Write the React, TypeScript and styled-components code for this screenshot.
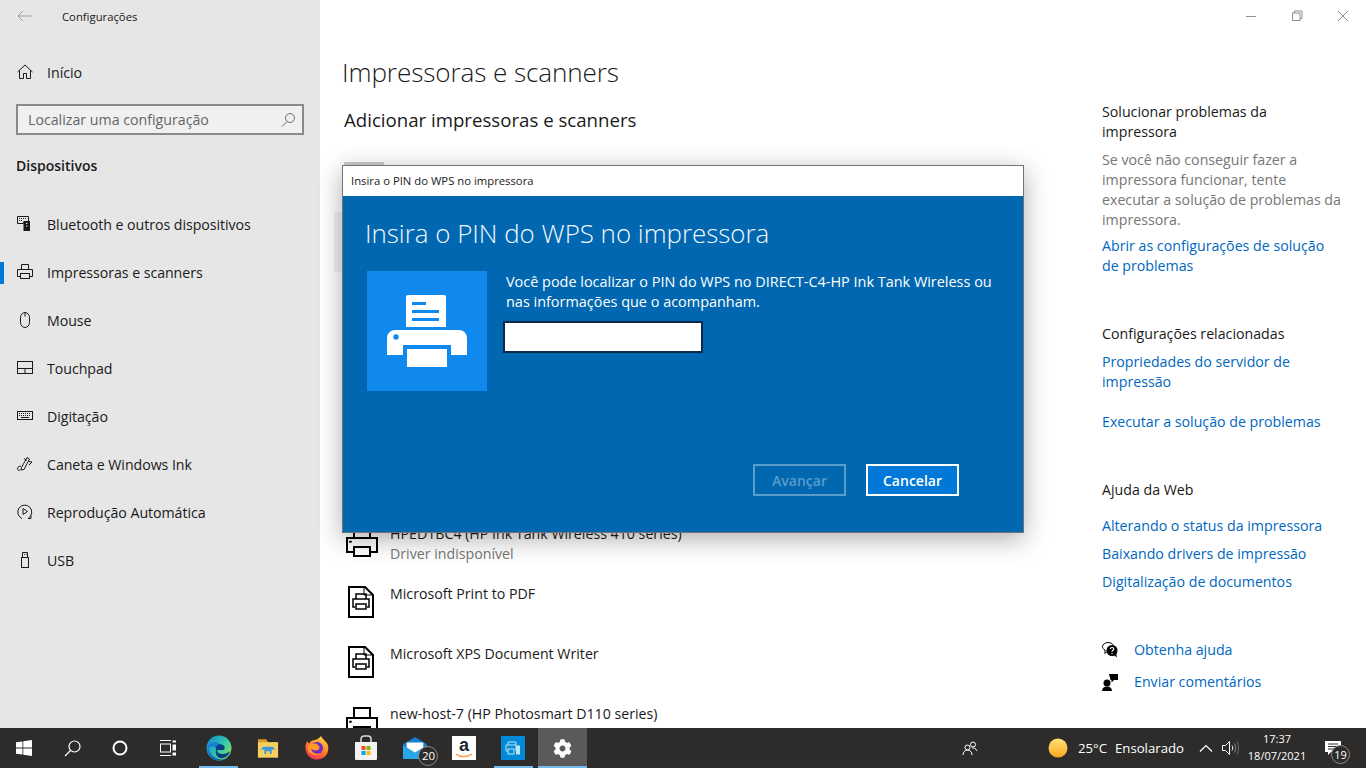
import React from "react";
import styled, { createGlobalStyle } from "styled-components";
import { FaCog } from "react-icons/fa";

const FONT = `"Open Sans", "Noto Sans", "Liberation Sans", sans-serif`;

const GlobalStyle = createGlobalStyle`
  html, body {
    margin: 0;
    padding: 0;
    width: 100%;
    height: 100%;
    overflow: hidden;
    background: #ffffff;
  }
  #root {
    height: 100%;
  }
  * {
    box-sizing: border-box;
  }
`;

const Screen = styled.div`
  position: relative;
  width: 1366px;
  height: 768px;
  display: flex;
  flex-direction: column;
  font-family: ${FONT};
  color: #1a1a1a;
  overflow: hidden;
`;

const Desktop = styled.div`
  flex: 1;
  min-height: 0;
  display: flex;
`;

/* sidebar */
const Sidebar = styled.aside`
  width: 320px;
  flex: none;
  background: #e6e6e6;
  display: flex;
  flex-direction: column;
`;

const AppBar = styled.div`
  height: 32px;
  display: flex;
  align-items: center;
  padding-left: 17px;
  gap: 30px;
  font-size: 11.3px;
`;

const HomeRow = styled.div`
  height: 48px;
  margin-top: 16px;
  display: flex;
  align-items: center;
  gap: 13px;
  padding-left: 16px;
  font-size: 14.2px;
`;

const SearchBox = styled.div`
  margin: 8px 16px 0 16px;
  height: 31px;
  border: 2px solid #8a8a8a;
  background: #f0f0f0;
  display: flex;
  align-items: center;
  justify-content: space-between;
  padding: 0 6px 0 10px;
  font-size: 14.2px;
  color: #666666;
`;

const SectionTitle = styled.div`
  margin: 20px 0 0 16px;
  height: 22px;
  line-height: 22px;
  font-size: 14px;
  font-weight: 600;
  color: #1a1a1a;
`;

const NavList = styled.nav`
  margin-top: 23px;
  display: flex;
  flex-direction: column;
`;

const NavItem = styled.div<{ $active?: boolean }>`
  position: relative;
  height: 48px;
  display: flex;
  align-items: center;
  gap: 13px;
  padding-left: 16px;
  font-size: 14.2px;
  letter-spacing: -0.05px;

  &::before {
    content: "";
    display: ${(p) => (p.$active ? "block" : "none")};
    position: absolute;
    left: 0;
    top: 14px;
    width: 4px;
    height: 22px;
    background: #0078d7;
  }
`;

const NavIcon = styled.svg`
  width: 18px;
  height: 18px;
  flex: none;
  fill: none;
  stroke: #1a1a1a;
  stroke-width: 1;
`;

/* main column */
const Main = styled.main`
  flex: 1;
  min-width: 0;
  padding: 0 0 0 22px;
  overflow: hidden;
`;

const PageTitle = styled.h1`
  margin: 49px 0 0;
  height: 46px;
  line-height: 46px;
  font-size: 26.1px;
  font-weight: 300;
  color: #1a1a1a;
  letter-spacing: -0.1px;
`;

const SubTitle = styled.h2`
  margin: 7px 0 0 2px;
  height: 36px;
  line-height: 36px;
  font-size: 18.65px;
  font-weight: 400;
  color: #1a1a1a;
`;

const AddTile = styled.div`
  width: 40px;
  height: 40px;
  margin: 24px 0 0 2px;
  background: #cccccc;
`;

const PrinterList = styled.div`
  margin: 10px 0 0 -8px;
  display: flex;
  flex-direction: column;
`;

const SelectedRow = styled.div`
  width: 660px;
  height: 60px;
  background: #f2f2f2;
`;

const CoveredRows = styled.div`
  height: 240px;
`;

const PrinterRow = styled.div`
  height: 60px;
  display: flex;
  padding-left: 10px;
  gap: 10px;
`;

const PrinterIconBox = styled.div`
  width: 36px;
  height: 60px;
  flex: none;
  display: flex;
  align-items: center;
  justify-content: center;
`;

const PrinterText = styled.div`
  padding-top: 12px;
  font-size: 14.2px;
  line-height: 20px;
`;

const PrinterStatus = styled.div`
  color: #767676;
`;

/* right column */
const Aside = styled.aside`
  width: 264px;
  flex: none;
  padding-top: 102px;
  font-size: 14.2px;
  line-height: 20px;
`;

const AsideBlock = styled.section`
  margin-bottom: 48px;
  width: 242px;
`;

const AsideHeading = styled.div<{ $space?: number }>`
  margin-bottom: ${(p) => p.$space ?? 8}px;
  color: #1a1a1a;
`;

const AsideText = styled.div`
  color: #767676;
  margin-bottom: 6px;
`;

const AsideLink = styled.div<{ $space?: number }>`
  color: #0067c0;
  margin-bottom: ${(p) => p.$space ?? 0}px;
`;

const SupportRow = styled.div`
  display: flex;
  align-items: center;
  gap: 16px;
  height: 20px;
  margin-bottom: 12px;
  color: #0067c0;
`;

/* window buttons */
const WindowControls = styled.div`
  position: absolute;
  top: 0;
  right: 0;
  display: flex;
`;

const WindowButton = styled.div`
  width: 46px;
  height: 32px;
  display: flex;
  align-items: center;
  justify-content: center;
`;

const ControlIcon = styled.svg`
  width: 12px;
  height: 12px;
  fill: none;
  stroke: #8f8f8f;
  stroke-width: 1;
`;

/* dialog */
const Dialog = styled.div`
  position: absolute;
  left: 342px;
  top: 165px;
  width: 682px;
  height: 368px;
  border: 1px solid #737373;
  display: flex;
  flex-direction: column;
  box-shadow: 0 6px 24px rgba(0, 0, 0, 0.32);
`;

const DialogTitleBar = styled.div`
  height: 30px;
  flex: none;
  background: #ffffff;
  display: flex;
  align-items: center;
  padding: 0 0 2px 8px;
  font-size: 11.3px;
  color: #1a1a1a;
`;

const DialogBody = styled.div`
  flex: 1;
  background: #0067b0;
  color: #ffffff;
  padding: 15px 22px 0 22px;
  display: flex;
  flex-direction: column;
`;

const DialogHeading = styled.div`
  height: 44px;
  line-height: 44px;
  font-size: 25.9px;
  font-weight: 300;
  color: #f4f8fc;
`;

const DialogContent = styled.div`
  margin-top: 16px;
  display: flex;
  padding-left: 2px;
`;

const Tile = styled.div`
  width: 120px;
  height: 120px;
  flex: none;
  background: #0f89ee;
  display: flex;
  align-items: center;
  justify-content: center;
`;

const PinColumn = styled.div`
  margin-left: 16px;
  width: 500px;
`;

const PinHint = styled.div`
  padding: 1px 0 0 3px;
  font-size: 14.45px;
  line-height: 20px;
`;

const PinInput = styled.div`
  margin-top: 9px;
  width: 200px;
  height: 32px;
  background: #ffffff;
  border: 2px solid #0b2a49;
`;

const DialogActions = styled.div`
  margin-top: 73px;
  display: flex;
  justify-content: flex-end;
  gap: 20px;
  padding-right: 42px;
`;

const DialogButton = styled.div<{ $primary?: boolean }>`
  width: 93px;
  height: 32px;
  display: flex;
  align-items: center;
  justify-content: center;
  font-size: 14px;
  font-weight: 600;
  border: 2px solid ${(p) => (p.$primary ? "#ffffff" : "rgba(255,255,255,0.36)")};
  background: ${(p) => (p.$primary ? "#0078d7" : "transparent")};
  color: ${(p) => (p.$primary ? "#ffffff" : "rgba(255,255,255,0.36)")};
`;

/* taskbar */
const Taskbar = styled.footer`
  height: 40px;
  flex: none;
  background: #2d2c2b;
  display: flex;
  align-items: stretch;
  color: #ffffff;
  position: relative;
`;

const ShellButton = styled.div`
  width: 48px;
  display: flex;
  align-items: center;
  justify-content: center;
`;

const Pinned = styled.div`
  margin-left: 2px;
  display: flex;
`;

const PinnedButton = styled.div<{ $running?: boolean; $current?: boolean }>`
  position: relative;
  width: 49.1px;
  display: flex;
  align-items: center;
  justify-content: center;
  background: ${(p) => (p.$current ? "#5c5a58" : "transparent")};

  &::after {
    content: "";
    display: ${(p) => (p.$running ? "block" : "none")};
    position: absolute;
    left: ${(p) => (p.$current ? 0 : 5)}px;
    right: ${(p) => (p.$current ? 0 : 5)}px;
    bottom: 0;
    height: 2px;
    background: #76b9ed;
  }
`;

const CountBadge = styled.span`
  position: absolute;
  width: 20px;
  height: 20px;
  right: 1px;
  bottom: 2px;
  border-radius: 50%;
  background: #2d2c2b;
  border: 1px solid #8a8a8a;
  font-size: 11.5px;
  line-height: 18px;
  text-align: center;
  color: #ffffff;
`;

const Tray = styled.div`
  margin-left: auto;
  display: flex;
  align-items: center;
  font-size: 13.2px;
  color: #ffffff;
`;

const PeopleSlot = styled.div`
  width: 24px;
  margin-right: 66px;
  display: flex;
  justify-content: center;
`;

const WeatherText = styled.span`
  margin-left: 10px;
  white-space: nowrap;
`;

const WeatherLabel = styled.span`
  margin-left: 8px;
  white-space: nowrap;
`;

const TrayIcon = styled.div<{ $gap: number }>`
  margin-left: ${(p) => p.$gap}px;
  display: flex;
  align-items: center;
`;

const Clock = styled.div`
  width: 72px;
  margin-left: 2px;
  padding-bottom: 2px;
  text-align: center;
  font-size: 11px;
  line-height: 17px;
`;

const Notify = styled.div`
  position: relative;
  width: 40px;
  height: 40px;
  margin-right: 13px;
  display: flex;
  align-items: center;
  justify-content: center;
`;

const NotifyBadge = styled.span`
  position: absolute;
  left: 18px;
  top: 17px;
  width: 19px;
  height: 19px;
  border-radius: 50%;
  background: #2d2c2b;
  border: 1px solid #8a8a8a;
  font-size: 11px;
  line-height: 17px;
  text-align: center;
`;

const AmazonTile = styled.div`
  position: relative;
  width: 24px;
  height: 24px;
  background: #ffffff;
  color: #1a2430;
  font-family: "Liberation Sans", sans-serif;
  font-weight: 700;
  font-size: 18px;
  line-height: 19px;
  text-align: center;
`;

const AmazonSmile = styled.svg`
  position: absolute;
  left: 3px;
  bottom: 1px;
  width: 18px;
  height: 6px;
  fill: none;
  stroke: #f79c34;
  stroke-width: 1.4;
`;

const AppTile = styled.div`
  width: 24px;
  height: 24px;
  background: #0089d6;
  display: flex;
  align-items: center;
  justify-content: center;
`;

const GearIcon = styled(FaCog)`
  width: 19px;
  height: 19px;
  color: #ffffff;
`;

const navEntries = [
  {
    label: "Bluetooth e outros dispositivos",
    icon: (
      <>
        <path d="M1.5 1.5h11v6h-5v1h-6z" />
        <path d="M3 3.5h8M3 5.5h4" strokeDasharray="1 1" />
        <rect x="8" y="6.5" width="5.5" height="9" fill="#1a1a1a" />
        <path d="M10 8.5h1.500M10 11h1.500" stroke="#e6e6e6" />
      </>
    ),
  },
  {
    label: "Impressoras e scanners",
    active: true,
    icon: (
      <>
        <path d="M5.500 6.500v-5h7v5" />
        <path d="M4.500 13.500h-3v-7h15v7h-3" />
        <rect x="4.500" y="10.500" width="9" height="5" />
      </>
    ),
  },
  {
    label: "Mouse",
    icon: (
      <>
        <path d="M4.500 6.500a4.500 5 0 0 1 9 0v5a4.500 5 0 0 1-9 0z" />
        <path d="M9 1.500v4" />
      </>
    ),
  },
  {
    label: "Touchpad",
    icon: (
      <>
        <rect x="1.500" y="2.500" width="15" height="12" />
        <path d="M1.500 9.500h15M9 9.500v5" />
      </>
    ),
  },
  {
    label: "Digitação",
    icon: (
      <>
        <rect x="1.500" y="4.500" width="15" height="8" />
        <path d="M3 6.500h12M3 8.500h12" strokeDasharray="1 1" />
        <path d="M5 10.500h8" />
      </>
    ),
  },
  {
    label: "Caneta e Windows Ink",
    icon: (
      <>
        <path d="M5.500 12.500l5.500-10 2.500 1.500-5.500 10.500-3 .5z" />
        <path d="M8 3.500l3 2M13 6.500l3 .5-3 3" />
        <path d="M5 11c-3 .5-4 2-3.500 3.500.5 1.200 2 1 3 0" />
      </>
    ),
  },
  {
    label: "Reprodução Automática",
    icon: (
      <>
        <path d="M6 15.500a7 7 0 1 1 6.500-.5" />
        <path d="M7 5.500l4.500 3-4.500 3z" />
        <path d="M15 12.500v3h-3" />
      </>
    ),
  },
  {
    label: "USB",
    icon: (
      <>
        <rect x="5.500" y="6.500" width="7" height="10" />
        <path d="M6.500 6.500v-5h5v5" />
        <path d="M8 3.500h.8M9.700 3.500h.8" />
      </>
    ),
  },
];

function PrinterOutline() {
  return (
    <svg width="34" height="32" viewBox="0 0 34 32" fill="none" stroke="#000" strokeWidth="2">
      <path d="M9 12V2h16v10" />
      <path d="M9 26H2V12h30v14h-7" />
      <rect x="9" y="21" width="16" height="9" />
      <rect x="4.500" y="15" width="2" height="1.500" fill="#000" strokeWidth="0.500" />
    </svg>
  );
}

function DocPrinter() {
  return (
    <svg width="28" height="32" viewBox="0 0 28 32" fill="none" stroke="#000" strokeWidth="2">
      <path d="M1 1h16l8 8v22H1z" />
      <path d="M16 1v8h8" strokeWidth="1" />
      <path d="M8 13V8h10v5" strokeWidth="1.500" />
      <path d="M7 21H5v-8h16v8h-2" strokeWidth="1.500" />
      <rect x="8" y="18" width="10" height="5" strokeWidth="1.500" />
    </svg>
  );
}

function BigPrinter() {
  return (
    <svg width="80" height="72" viewBox="0 0 80 72" fill="#fff">
      <path d="M21 0h36a2 2 0 0 1 2 2v30H19V2a2 2 0 0 1 2-2z" />
      <rect x="25" y="7" width="14" height="3" fill="#0f89ee" />
      <rect x="25" y="15" width="27" height="3" fill="#0f89ee" />
      <rect x="25" y="23" width="27" height="3" fill="#0f89ee" />
      <path d="M8 35h64a8 8 0 0 1 8 8v17H64V50H16v10H0V43a8 8 0 0 1 8-8z" />
      <rect x="20" y="54" width="40" height="18" />
      <circle cx="9" cy="42" r="2.700" fill="#0f89ee" />
    </svg>
  );
}

function EdgeLogo() {
  return (
    <svg width="26" height="26" viewBox="0 0 26 26">
      <defs>
        <linearGradient id="edgeTop" x1="0" y1="0" x2="1" y2="0.700">
          <stop offset="0" stopColor="#0c8ad0" />
          <stop offset="0.600" stopColor="#30c5b0" />
          <stop offset="1" stopColor="#7fe06a" />
        </linearGradient>
        <linearGradient id="edgeBottom" x1="0" y1="0" x2="1" y2="1">
          <stop offset="0" stopColor="#1a8fe0" />
          <stop offset="1" stopColor="#0c4c9a" />
        </linearGradient>
      </defs>
      <circle cx="13" cy="13" r="12.500" fill="url(#edgeTop)" />
      <path d="M1 14c0-6 6-8 10-6.500 4 1.500 6 4 6 7-2 .8-6 1-7 -1-2-3-6-2-7 0 0 5 6 11 13 11 3 0 5-1 7-3-3 4-7 4-10 4C6 25.500 1 20 1 14z" fill="url(#edgeBottom)" />
      <path d="M10 15c-1-4 3-7 7-5 2 1 2 3 1 5h-7c0 3 3 4 6 4 2 0 5-1 7-3-1 5-6 8-10 7-3-1-5-4-4-8z" fill="#0a3f80" />
    </svg>
  );
}

function FolderLogo() {
  return (
    <svg width="22" height="19" viewBox="0 0 24 20">
      <path d="M1 0h9l2 3h-11z" fill="#d69a28" />
      <rect x="1" y="3" width="22" height="17" fill="#f7cf5c" />
      <path d="M7 8h10l3 3H16v5H8v-5H4z" fill="#3a9ae0" />
      <rect x="10" y="13" width="4" height="4" fill="#f7cf5c" />
    </svg>
  );
}

function FirefoxLogo() {
  return (
    <svg width="24" height="24" viewBox="0 0 24 24">
      <defs>
        <linearGradient id="foxBody" x1="0.700" y1="0" x2="0.200" y2="1">
          <stop offset="0" stopColor="#ffd53d" />
          <stop offset="0.500" stopColor="#ff7a2a" />
          <stop offset="1" stopColor="#f02a5a" />
        </linearGradient>
      </defs>
      <path d="M16 0c1 3 5 5 6.500 8 1.500 4 1 9-2.500 12.500-4 3.500-10 4-14 1.500C2 19.500 0 15 .5 10c0-2 1-4 2-5 0 1 .5 2 1.500 2.500C5 5 8 4 10 4c2-1 5-2 6-4z" fill="url(#foxBody)" />
      <circle cx="12" cy="12" r="6" fill="#6b2bc7" />
      <path d="M3 10c3-3 8-3 10-1 2 1 2 4 0 5-2 1-5 0-7-1 1 4 6 6 10 4-4 4-11 2-13-3z" fill="#ff9a2a" />
    </svg>
  );
}

function StoreLogo() {
  return (
    <svg width="24" height="26" viewBox="0 0 24 26">
      <path d="M7 8V4a3 3 0 0 1 3-3h4a3 3 0 0 1 3 3v4" fill="none" stroke="#dcdcdc" strokeWidth="1.500" />
      <path d="M1 7h22v17a1 1 0 0 1-1 1H2a1 1 0 0 1-1-1z" fill="#f2f2f2" />
      <rect x="7.500" y="11" width="4" height="4" fill="#f25022" />
      <rect x="12.500" y="11" width="4" height="4" fill="#7fba00" />
      <rect x="7.500" y="16" width="4" height="4" fill="#00a4ef" />
      <rect x="12.500" y="16" width="4" height="4" fill="#ffb900" />
    </svg>
  );
}

function MailLogo() {
  return (
    <svg width="24" height="24" viewBox="0 0 26 24">
      <path d="M0 8l13-8 13 8v16H0z" fill="#1281d0" />
      <path d="M4 6h18v6l-9 6-9-6z" fill="#ffffff" />
      <path d="M0 9l13 8 13-8v15H0z" fill="#28a8ea" />
    </svg>
  );
}

export default function App() {
  return (
    <Screen>
      <GlobalStyle />
      <Desktop>
        <Sidebar>
          <AppBar>
            <svg width="15" height="12" viewBox="0 0 15 12" fill="none" stroke="#9a9a9a">
              <path d="M14.500 6H1M6 1L1 6l5 5" />
            </svg>
            Configurações
          </AppBar>
          <HomeRow>
            <NavIcon viewBox="0 0 18 18">
              <path d="M1.500 9L9 2l7.500 7M3.500 7.500v8h4v-5h3v5h4v-8" />
            </NavIcon>
            Início
          </HomeRow>
          <SearchBox>
            Localizar uma configuração
            <svg width="16" height="16" viewBox="0 0 16 16" fill="none" stroke="#6f6f6f">
              <circle cx="10" cy="6" r="4.500" />
              <path d="M7 9.500L2 14.500" />
            </svg>
          </SearchBox>
          <SectionTitle>Dispositivos</SectionTitle>
          <NavList>
            {navEntries.map((entry) => (
              <NavItem key={entry.label} $active={entry.active}>
                <NavIcon viewBox="0 0 18 18">{entry.icon}</NavIcon>
                {entry.label}
              </NavItem>
            ))}
          </NavList>
        </Sidebar>
        <Main>
          <PageTitle>Impressoras e scanners</PageTitle>
          <SubTitle>Adicionar impressoras e scanners</SubTitle>
          <AddTile />
          <PrinterList>
            <SelectedRow />
            <CoveredRows />
            <PrinterRow>
              <PrinterIconBox>
                <PrinterOutline />
              </PrinterIconBox>
              <PrinterText>
                HPED1BC4 (HP Ink Tank Wireless 410 series)
                <PrinterStatus>Driver indisponível</PrinterStatus>
              </PrinterText>
            </PrinterRow>
            <PrinterRow>
              <PrinterIconBox>
                <DocPrinter />
              </PrinterIconBox>
              <PrinterText>Microsoft Print to PDF</PrinterText>
            </PrinterRow>
            <PrinterRow>
              <PrinterIconBox>
                <DocPrinter />
              </PrinterIconBox>
              <PrinterText>Microsoft XPS Document Writer</PrinterText>
            </PrinterRow>
            <PrinterRow>
              <PrinterIconBox>
                <PrinterOutline />
              </PrinterIconBox>
              <PrinterText>new-host-7 (HP Photosmart D110 series)</PrinterText>
            </PrinterRow>
          </PrinterList>
        </Main>
        <Aside>
          <AsideBlock>
            <AsideHeading>Solucionar problemas da impressora</AsideHeading>
            <AsideText>
              Se você não conseguir fazer a impressora funcionar, tente executar a solução de
              problemas da impressora.
            </AsideText>
            <AsideLink>Abrir as configurações de solução de problemas</AsideLink>
          </AsideBlock>
          <AsideBlock>
            <AsideHeading>Configurações relacionadas</AsideHeading>
            <AsideLink $space={20}>Propriedades do servidor de impressão</AsideLink>
            <AsideLink>Executar a solução de problemas</AsideLink>
          </AsideBlock>
          <AsideBlock>
            <AsideHeading $space={16}>Ajuda da Web</AsideHeading>
            <AsideLink $space={8}>Alterando o status da impressora</AsideLink>
            <AsideLink $space={8}>Baixando drivers de impressão</AsideLink>
            <AsideLink>Digitalização de documentos</AsideLink>
          </AsideBlock>
          <SupportRow>
            <svg width="16" height="16" viewBox="0 0 16 16">
              <path d="M6 .5c3 0 5.500 1.500 5.500 4S9 8.500 6 8.500l-3 3V8C1.500 7.500.5 6 .5 4.500c0-2 2.500-4 5.500-4z" fill="#fff" stroke="#000" />
              <circle cx="10" cy="8.500" r="5.500" fill="#000" />
              <path d="M12 13l3 2.500-1-5z" fill="#000" />
              <path d="M8.300 7c0-2 3.500-2 3.500 0 0 1.300-1.800 1.300-1.800 2.700M10 11v1" fill="none" stroke="#fff" strokeWidth="1.200" />
            </svg>
            Obtenha ajuda
          </SupportRow>
          <SupportRow>
            <svg width="16" height="17" viewBox="0 0 16 17" fill="#000">
              <circle cx="5" cy="9" r="3.500" />
              <path d="M0 17c0-3 2-4.500 5-4.500s5 1.500 5 4.500z" />
              <path d="M7 0h9v6h-4l-2.500 2.500V6H8.500z" />
            </svg>
            Enviar comentários
          </SupportRow>
        </Aside>
      </Desktop>

      <WindowControls>
        <WindowButton>
          <ControlIcon viewBox="0 0 12 12">
            <path d="M1 6.500h10" />
          </ControlIcon>
        </WindowButton>
        <WindowButton>
          <ControlIcon viewBox="0 0 12 12">
            <rect x="1.500" y="3" width="7.500" height="7.500" />
            <path d="M3.500 3V1h7.500v7.500H9" />
          </ControlIcon>
        </WindowButton>
        <WindowButton>
          <ControlIcon viewBox="0 0 12 12">
            <path d="M1 1l10 10M11 1L1 11" />
          </ControlIcon>
        </WindowButton>
      </WindowControls>

      <Dialog>
        <DialogTitleBar>Insira o PIN do WPS no impressora</DialogTitleBar>
        <DialogBody>
          <DialogHeading>Insira o PIN do WPS no impressora</DialogHeading>
          <DialogContent>
            <Tile>
              <BigPrinter />
            </Tile>
            <PinColumn>
              <PinHint>
                Você pode localizar o PIN do WPS no DIRECT-C4-HP Ink Tank Wireless ou nas
                informações que o acompanham.
              </PinHint>
              <PinInput />
            </PinColumn>
          </DialogContent>
          <DialogActions>
            <DialogButton>Avançar</DialogButton>
            <DialogButton $primary>Cancelar</DialogButton>
          </DialogActions>
        </DialogBody>
      </Dialog>

      <Taskbar>
        <ShellButton>
          <svg width="16" height="16" viewBox="0 0 16 16" fill="#fff">
            <path d="M0 2.300l6.500-.9v6.200H0zM7.300 1.300L16 0v7.600H7.300zM0 8.400h6.500v6.200L0 13.700zM7.300 8.400H16V16l-8.700-1.200z" />
          </svg>
        </ShellButton>
        <ShellButton>
          <svg width="17" height="17" viewBox="0 0 17 17" fill="none" stroke="#fff" strokeWidth="1.200">
            <circle cx="10.500" cy="6.500" r="5.500" />
            <path d="M6.500 10.500L1 16" />
          </svg>
        </ShellButton>
        <ShellButton>
          <svg width="16" height="16" viewBox="0 0 16 16" fill="none" stroke="#fff" strokeWidth="2">
            <circle cx="8" cy="8" r="6.500" />
          </svg>
        </ShellButton>
        <ShellButton>
          <svg width="16" height="16" viewBox="0 0 16 16" fill="none" stroke="#fff">
            <path d="M0 .5h11M0 15.500h11" />
            <rect x=".5" y="4" width="10" height="8" />
            <rect x="13" y="1" width="3" height="1" fill="#fff" />
            <rect x="13" y="5" width="3" height="5" fill="#fff" />
            <rect x="13" y="13" width="3" height="2" fill="#fff" />
          </svg>
        </ShellButton>
        <Pinned>
          <PinnedButton $running>
            <EdgeLogo />
          </PinnedButton>
          <PinnedButton>
            <FolderLogo />
          </PinnedButton>
          <PinnedButton>
            <FirefoxLogo />
          </PinnedButton>
          <PinnedButton>
            <StoreLogo />
          </PinnedButton>
          <PinnedButton>
            <MailLogo />
            <CountBadge>20</CountBadge>
          </PinnedButton>
          <PinnedButton>
            <AmazonTile>
              a
              <AmazonSmile viewBox="0 0 18 6">
                <path d="M1 1c4 3.500 11 3.500 16 0" />
              </AmazonSmile>
            </AmazonTile>
          </PinnedButton>
          <PinnedButton $running>
            <AppTile>
              <svg width="16" height="16" viewBox="0 0 16 16" fill="none" stroke="#bfe4f8">
                <path d="M3 5V2h8v3M3 11H1V5h10v6" />
                <rect x="3" y="9" width="6" height="5" />
                <rect x="11.500" y="6" width="3" height="8" fill="#bfe4f8" />
              </svg>
            </AppTile>
          </PinnedButton>
          <PinnedButton $running $current>
            <GearIcon />
          </PinnedButton>
        </Pinned>
        <Tray>
          <PeopleSlot>
            <svg width="16" height="16" viewBox="0 0 16 16" fill="none" stroke="#fff">
              <circle cx="11" cy="4.500" r="2.500" />
              <circle cx="5.500" cy="7.500" r="2.500" />
              <path d="M1 15c0-3 2-5 4.500-5S10 12 10 15M10 8c2-.5 4 .5 5 3" />
            </svg>
          </PeopleSlot>
          <svg width="20" height="20" viewBox="0 0 20 20">
            <defs>
              <linearGradient id="sun" x1="0" y1="0" x2="0" y2="1">
                <stop offset="0" stopColor="#ffe177" />
                <stop offset="1" stopColor="#fba81e" />
              </linearGradient>
            </defs>
            <circle cx="10" cy="10" r="9.500" fill="url(#sun)" />
          </svg>
          <WeatherText>25°C</WeatherText>
          <WeatherLabel>Ensolarado</WeatherLabel>
          <TrayIcon $gap={15}>
            <svg width="14" height="8" viewBox="0 0 14 8" fill="none" stroke="#fff" strokeWidth="1.200">
              <path d="M1 7.500L7 1.500l6 6" />
            </svg>
          </TrayIcon>
          <TrayIcon $gap={9}>
            <svg width="17" height="16" viewBox="0 0 17 16" fill="none" stroke="#fff">
              <path d="M.5 5.500h3l4-4v13l-4-4h-3z" />
              <path d="M10 5.500c1 1.500 1 3.500 0 5" />
              <path d="M12.500 3.500c1.500 2.500 1.500 6.500 0 9" stroke="#8a8a8a" />
              <path d="M15 1.500c2 3.500 2 9.500 0 13" stroke="#6a6a6a" />
            </svg>
          </TrayIcon>
          <Clock>
            17:37
            <br />
            18/07/2021
          </Clock>
          <Notify>
            <svg width="16" height="14" viewBox="0 0 16 14" fill="#fff">
              <path d="M0 0h16v11H6l-3 3v-3H0z" />
              <path d="M3 3h10M3 5.500h10M3 8h7" stroke="#2d2c2b" />
            </svg>
            <NotifyBadge>19</NotifyBadge>
          </Notify>
        </Tray>
      </Taskbar>
    </Screen>
  );
}
